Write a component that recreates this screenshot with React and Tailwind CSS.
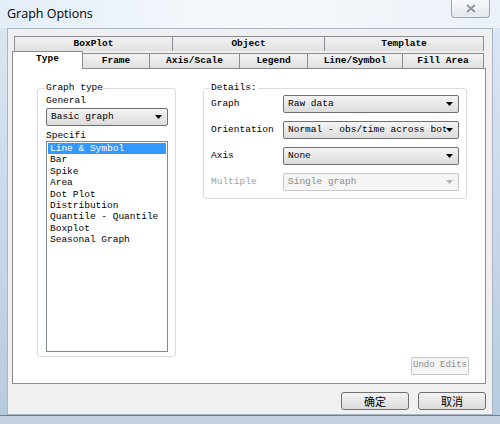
import React from "react";

const mono = "font-['Liberation_Mono',monospace]";

function Combo({ value, disabled, className = "" }) {
  return (
    <div
      className={`flex items-center justify-between rounded-[2px] border ${
        disabled
          ? "border-[#c9c9c9] bg-[#f4f4f4] text-[#8d8d8d]"
          : "border-[#707070] bg-gradient-to-b from-[#f4f4f4] to-[#dcdcdc] text-black"
      } pl-[4px] pr-[5px] ${className}`}
    >
      <span className="whitespace-nowrap overflow-hidden">{value}</span>
      <svg width="7" height="4" viewBox="0 0 7 4" className="shrink-0">
        <path d="M0 0h7L3.5 4z" fill={disabled ? "#b5b5b5" : "#000"} />
      </svg>
    </div>
  );
}

function Group({ title, className = "", children }) {
  return (
    <div className={`flex flex-col rounded-[3px] border border-[#dcdcdc] ${className}`}>
      <span className="-mt-[7px] -ml-[1px] self-start bg-white px-[1px] leading-[12px]">{title}</span>
      {children}
    </div>
  );
}

const row1 = [
  ["BoxPlot", "w-[158px]"],
  ["Object", "w-[152px]"],
  ["Template", "w-[160px]"],
];
const row2 = [
  ["Frame", "w-[67px]"],
  ["Axis/Scale", "w-[90px]"],
  ["Legend", "w-[68px]"],
  ["Line/Symbol", "w-[95px]"],
  ["Fill Area", "w-[81px]"],
];
const items = [
  "Bar",
  "Spike",
  "Area",
  "Dot Plot",
  "Distribution",
  "Quantile - Quantile",
  "Boxplot",
  "Seasonal Graph",
];

export default function App() {
  return (
    <div className="flex h-[424px] w-[500px] flex-col overflow-hidden bg-gradient-to-b from-[#dce8f4] to-[#b6cadf]">
      {/* title bar */}
      <div className="flex h-[28px] shrink-0 items-start justify-between bg-gradient-to-r from-[#e4eef8] via-[#f6f9fc] to-[#eaf1f8] pl-[7px] pr-[10px]">
        <span className="mt-[5px] font-['Open_Sans',sans-serif] text-[12.5px] text-black">
          Graph Options
        </span>
        <div className="flex h-[18px] w-[39px] items-center justify-center rounded-b-[4px] border border-t-0 border-[#9aa6b4] bg-gradient-to-b from-[#f7f9fb] to-[#e3e8ee]">
          <svg width="10" height="9" viewBox="0 0 10 9">
            <path d="M1 1l8 7M9 1L1 8" stroke="#8c96a2" strokeWidth="1.8" />
          </svg>
        </div>
      </div>

      <div className="flex h-[387px] shrink-0 px-[7px]">
        <div className={`flex flex-1 flex-col border border-[#aab6c3] bg-[#f0f0f0] pl-[4px] pr-[6px] pt-[7px] text-[9.5px] ${mono}`}>
          {/* tabs */}
          <div className="flex h-[15px] pl-[2px]">
            {row1.map(([t, w]) => (
              <div
                key={t}
                className={`${w} flex items-center justify-center border border-b-0 border-r-0 border-[#898c95] bg-gradient-to-b from-[#f2f2f2] to-[#e1e1e1] font-bold last:border-r`}
              >
                {t}
              </div>
            ))}
          </div>
          <div className="relative z-10 -mb-px flex h-[18px] items-end">
            <div className="flex h-[18px] w-[71px] items-center justify-center border border-b-0 border-[#898c95] bg-white pb-[2px] font-bold">
              Type
            </div>
            {row2.map(([t, w]) => (
              <div
                key={t}
                className={`${w} flex h-[16px] items-center justify-center border-b border-r border-t border-[#898c95] bg-gradient-to-b from-[#f2f2f2] to-[#e1e1e1] font-bold`}
              >
                {t}
              </div>
            ))}
          </div>

          {/* pane */}
          <div className="flex h-[316px] flex-col border border-[#898c95] bg-white text-[9.5px] text-black">
            <div className="flex items-start pl-[24px] pt-[19px]">
              <Group title="Graph type" className="h-[269px] w-[139px] pl-[8px] pr-[7px]">
                <span className="mt-[1px] leading-[12px]">General</span>
                <Combo value="Basic graph" className="mt-[1px] h-[18px]" />
                <span className="mt-[5px] leading-[10px]">Specifi</span>
                <div className="flex h-[211px] flex-col border border-[#828790] p-[1px]">
                  <div className="h-[11.4px] bg-[#3399ff] pl-[2px] leading-[11.4px] text-white">
                    Line &amp; Symbol
                  </div>
                  {items.map((t) => (
                    <div key={t} className="h-[11.4px] pl-[2px] leading-[11.4px]">
                      {t}
                    </div>
                  ))}
                </div>
              </Group>

              <Group title="Details:" className="ml-[27px] h-[111px] w-[264px] pl-[7px] pr-[7px]">
                <div className="mt-[1px] flex flex-col gap-[8px]">
                  <div className="flex items-center justify-between">
                    <span>Graph</span>
                    <Combo value="Raw data" className="h-[18px] w-[176px]" />
                  </div>
                  <div className="flex items-center justify-between">
                    <span>Orientation</span>
                    <Combo value="Normal - obs/time across bot" className="h-[18px] w-[176px]" />
                  </div>
                  <div className="flex items-center justify-between">
                    <span>Axis</span>
                    <Combo value="None" className="h-[18px] w-[176px]" />
                  </div>
                  <div className="flex items-center justify-between">
                    <span className="text-[#a0a0a0]">Multiple</span>
                    <Combo value="Single graph" disabled className="h-[18px] w-[176px]" />
                  </div>
                </div>
              </Group>
            </div>
            <div className="mt-auto mb-[9px] mr-[16px] flex justify-end">
              <div className="flex h-[18px] w-[58px] items-center justify-center whitespace-nowrap rounded-[2px] border border-[#c8c8c8] bg-[#f4f4f4] text-[9px] text-[#8d8d8d]">
                Undo Edits
              </div>
            </div>
          </div>

          {/* buttons */}
          <div className="mt-[8px] flex justify-end gap-[9px] font-['Noto_Sans_CJK_SC',sans-serif] text-[11px]">
            <div className="flex h-[18px] w-[68px] items-center justify-center rounded-[3px] border border-[#707070] bg-gradient-to-b from-[#f2f2f2] to-[#dddddd]">
              确定
            </div>
            <div className="flex h-[18px] w-[68px] items-center justify-center rounded-[3px] border border-[#707070] bg-gradient-to-b from-[#f2f2f2] to-[#dddddd]">
              取消
            </div>
          </div>
        </div>
      </div>

      <div className="flex-1 border-t border-[#6f7f90] bg-[#c3d0dd]" />
    </div>
  );
}
